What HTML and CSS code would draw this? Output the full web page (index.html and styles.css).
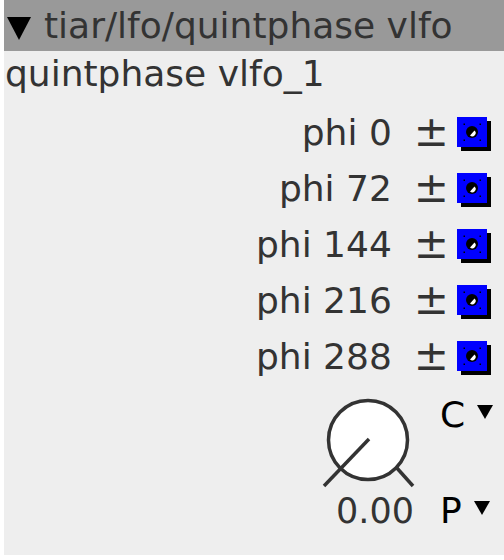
FILE: index.html
```html
<!DOCTYPE html>
<html lang="en">
<head>
    <meta charset="UTF-8">
    <title>quintphase vlfo</title>
    <link rel="stylesheet" href="styles.css">
</head>
<body>
    <div class="panel">
        <div class="titlebar"><span class="collapse"></span><span class="title">tiar/lfo/quintphase vlfo</span></div>
        <div class="instance">quintphase vlfo_1</div>

        <div class="outlets">
            <div class="outlet">
                <span class="label">phi 0</span>
                <span class="pm">±</span>
                <svg class="jack" width="34" height="34" viewBox="0 0 34 34">
                    <rect x="4" y="4" width="30" height="30" fill="#000"/>
                    <rect x="0" y="0" width="30" height="30" fill="#0000ff"/>
                    <circle cx="15" cy="15" r="6" fill="#000"/>
                    <path d="M17.5 13.5 A3.2 3.2 0 0 1 13 18.5 Z" fill="#fff"/>
                    <rect x="6.5" y="6.5" width="1.5" height="1.5" fill="#000"/>
                    <rect x="22.5" y="6.5" width="1.5" height="1.5" fill="#000"/>
                    <rect x="6.5" y="22.5" width="1.5" height="1.5" fill="#000"/>
                    <rect x="22.5" y="22.5" width="1.5" height="1.5" fill="#000"/>
                </svg>
            </div>
            <div class="outlet">
                <span class="label">phi 72</span>
                <span class="pm">±</span>
                <svg class="jack" width="34" height="34" viewBox="0 0 34 34">
                    <rect x="4" y="4" width="30" height="30" fill="#000"/>
                    <rect x="0" y="0" width="30" height="30" fill="#0000ff"/>
                    <circle cx="15" cy="15" r="6" fill="#000"/>
                    <path d="M17.5 13.5 A3.2 3.2 0 0 1 13 18.5 Z" fill="#fff"/>
                    <rect x="6.5" y="6.5" width="1.5" height="1.5" fill="#000"/>
                    <rect x="22.5" y="6.5" width="1.5" height="1.5" fill="#000"/>
                    <rect x="6.5" y="22.5" width="1.5" height="1.5" fill="#000"/>
                    <rect x="22.5" y="22.5" width="1.5" height="1.5" fill="#000"/>
                </svg>
            </div>
            <div class="outlet">
                <span class="label">phi 144</span>
                <span class="pm">±</span>
                <svg class="jack" width="34" height="34" viewBox="0 0 34 34">
                    <rect x="4" y="4" width="30" height="30" fill="#000"/>
                    <rect x="0" y="0" width="30" height="30" fill="#0000ff"/>
                    <circle cx="15" cy="15" r="6" fill="#000"/>
                    <path d="M17.5 13.5 A3.2 3.2 0 0 1 13 18.5 Z" fill="#fff"/>
                    <rect x="6.5" y="6.5" width="1.5" height="1.5" fill="#000"/>
                    <rect x="22.5" y="6.5" width="1.5" height="1.5" fill="#000"/>
                    <rect x="6.5" y="22.5" width="1.5" height="1.5" fill="#000"/>
                    <rect x="22.5" y="22.5" width="1.5" height="1.5" fill="#000"/>
                </svg>
            </div>
            <div class="outlet">
                <span class="label">phi 216</span>
                <span class="pm">±</span>
                <svg class="jack" width="34" height="34" viewBox="0 0 34 34">
                    <rect x="4" y="4" width="30" height="30" fill="#000"/>
                    <rect x="0" y="0" width="30" height="30" fill="#0000ff"/>
                    <circle cx="15" cy="15" r="6" fill="#000"/>
                    <path d="M17.5 13.5 A3.2 3.2 0 0 1 13 18.5 Z" fill="#fff"/>
                    <rect x="6.5" y="6.5" width="1.5" height="1.5" fill="#000"/>
                    <rect x="22.5" y="6.5" width="1.5" height="1.5" fill="#000"/>
                    <rect x="6.5" y="22.5" width="1.5" height="1.5" fill="#000"/>
                    <rect x="22.5" y="22.5" width="1.5" height="1.5" fill="#000"/>
                </svg>
            </div>
            <div class="outlet">
                <span class="label">phi 288</span>
                <span class="pm">±</span>
                <svg class="jack" width="34" height="34" viewBox="0 0 34 34">
                    <rect x="4" y="4" width="30" height="30" fill="#000"/>
                    <rect x="0" y="0" width="30" height="30" fill="#0000ff"/>
                    <circle cx="15" cy="15" r="6" fill="#000"/>
                    <path d="M17.5 13.5 A3.2 3.2 0 0 1 13 18.5 Z" fill="#fff"/>
                    <rect x="6.5" y="6.5" width="1.5" height="1.5" fill="#000"/>
                    <rect x="22.5" y="6.5" width="1.5" height="1.5" fill="#000"/>
                    <rect x="6.5" y="22.5" width="1.5" height="1.5" fill="#000"/>
                    <rect x="22.5" y="22.5" width="1.5" height="1.5" fill="#000"/>
                </svg>
            </div>
        </div>

        <div class="controls">
            <div class="knob-wrap">
                <svg class="knob" width="96" height="96" viewBox="0 0 96 96">
                    <circle cx="48" cy="45" r="39.5" fill="#fff" stroke="#333" stroke-width="3.5"/>
                    <line x1="49" y1="44" x2="4" y2="91" stroke="#333" stroke-width="3.5"/>
                    <line x1="76" y1="72" x2="93" y2="91" stroke="#333" stroke-width="3.5"/>
                </svg>
                <div class="value">0.00</div>
            </div>
            <div class="selects">
                <div class="select">C <span class="arrow"></span></div>
                <div class="select">P <span class="arrow"></span></div>
            </div>
        </div>
    </div>
</body>
</html>
```

FILE: styles.css
```css
body {
    margin: 0;
    background-color: white;
    font-family: "DejaVu Sans", sans-serif;
    color: #333;
}

.panel {
    margin-left: 4px;
    height: 555px;
    background-color: #eeeeee;
    overflow: hidden;
}

.titlebar {
    display: flex;
    align-items: center;
    height: 51px;
    background-color: #999999;
    font-size: 36px;
    padding-left: 3px;
    white-space: nowrap;
    overflow: hidden;
}

.collapse {
    width: 0;
    height: 0;
    border-left: 12.5px solid transparent;
    border-right: 12.5px solid transparent;
    border-top: 23px solid black;
    margin-top: 6px;
    margin-right: 13px;
}

.title {
    line-height: 52px;
}

.instance {
    height: 53px;
    line-height: 45px;
    font-size: 36px;
    padding-left: 1px;
}

.outlets {
    display: flex;
    flex-direction: column;
}

.outlet {
    display: flex;
    justify-content: flex-end;
    align-items: center;
    height: 56px;
    font-size: 36px;
}

.outlet .label {
    margin-right: 22px;
}

.outlet .pm {
    font-size: 42px;
    line-height: 42px;
    margin-right: 8px;
}

.jack {
    display: block;
    margin-right: 13px;
    margin-top: 4px;
}

.controls {
    display: flex;
    justify-content: flex-end;
    padding-top: 11px;
}

.knob-wrap {
    width: 96px;
    text-align: right;
}

.knob {
    display: block;
}

.value {
    font-size: 35px;
    line-height: 40px;
    margin-right: 2px;
    margin-left: -20px;
}

.selects {
    display: flex;
    flex-direction: column;
    justify-content: space-between;
    width: 64px;
    margin-left: 24px;
}

.select {
    font-size: 36px;
    color: black;
    line-height: 40px;
    display: flex;
    align-items: flex-start;
}

.select .arrow {
    width: 0;
    height: 0;
    border-left: 8px solid transparent;
    border-right: 8px solid transparent;
    border-top: 14px solid black;
    margin-left: 12px;
    margin-top: 10px;
}
```
